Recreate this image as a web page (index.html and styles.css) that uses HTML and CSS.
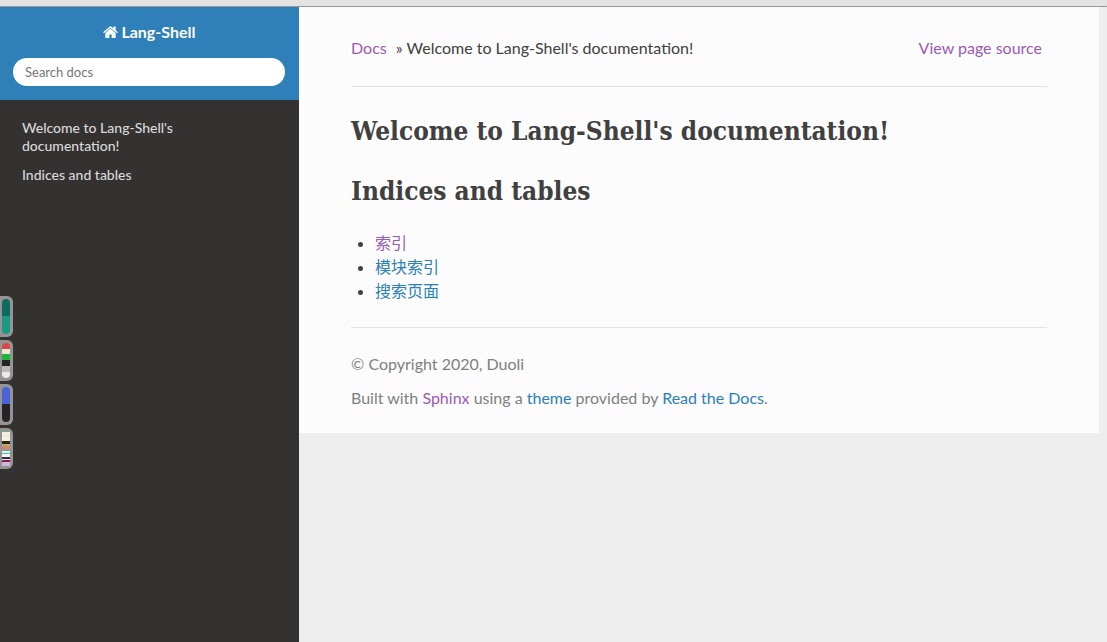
FILE: index.html
```
<!DOCTYPE html>
<html lang="zh-CN">
<head>
    <meta charset="UTF-8">
    <meta name="viewport" content="width=device-width, initial-scale=1.0">
    <title>Welcome to Lang-Shell's documentation!</title>
    <link rel="stylesheet" href="styles.css">
</head>
<body>
    <div class="window-edge"></div>
    <div class="page">
        <nav class="sidebar">
            <div class="sidebar-header">
                <a class="home-link" href="#">
                    <svg class="home-icon" viewBox="0 0 1664 1312" aria-hidden="true">
                        <path fill="currentColor" d="M1408 768v480q0 26-19 45t-45 19H960V928H704v384H320q-26 0-45-19t-19-45V768q0-1 .5-3t.5-3l575-474 575 474q1 2 1 6zm223-69l-62 74q-8 9-21 11h-3q-13 0-21-7L832 200 140 777q-12 8-24 7-13-2-21-11l-62-74q-8-10-7-23.500t11-21.500L756 55q32-26 76-26t76 26l244 204V64q0-14 9-23t23-9h192q14 0 23 9t9 23v408l219 182q10 8 11 21.500t-7 23.500z"/>
                    </svg>
                    Lang-Shell
                </a>
                <form class="search" role="search">
                    <input class="search-input" type="text" placeholder="Search docs" aria-label="Search docs">
                </form>
            </div>
            <ul class="menu">
                <li><a href="#welcome">Welcome to Lang-Shell's documentation!</a></li>
                <li><a href="#indices">Indices and tables</a></li>
            </ul>
        </nav>
        <div class="content-wrap">
            <div class="content">
                <header class="topbar">
                    <div class="breadcrumbs">
                        <a class="crumb visited" href="#">Docs</a>
                        <span>» Welcome to Lang-Shell's documentation!</span>
                    </div>
                    <a class="source-link visited" href="#">View page source</a>
                </header>
                <hr>
                <main>
                    <h1 id="welcome">Welcome to Lang-Shell's documentation!</h1>
                    <h1 id="indices">Indices and tables</h1>
                    <ul class="index-list">
                        <li><a class="visited" href="#">索引</a></li>
                        <li><a href="#">模块索引</a></li>
                        <li><a href="#">搜索页面</a></li>
                    </ul>
                </main>
                <hr>
                <footer>
                    <p>© Copyright 2020, Duoli</p>
                    <p>Built with <a class="visited" href="#">Sphinx</a> using a <a href="#">theme</a> provided by <a href="#">Read the Docs</a>.</p>
                </footer>
            </div>
        </div>
    </div>

    <!-- colour tabs docked to the left edge of the window -->
    <div class="dock">
        <div class="tab"><div class="swatch teal"></div></div>
        <div class="tab"><div class="swatch flag"></div></div>
        <div class="tab"><div class="swatch blue"></div></div>
        <div class="tab"><div class="swatch stripes"></div></div>
    </div>
</body>
</html>
```
FILE: styles.css
```
* {
    box-sizing: border-box;
}
body {
    margin: 0;
    min-height: 100vh;
    display: flex;
    flex-direction: column;
    font-family: Lato, "Noto Sans CJK SC", sans-serif;
    font-size: 16px;
    line-height: 24px;
    color: #404040;
    background: #eee;
}
a {
    color: #2980b9;
    text-decoration: none;
}
a.visited {
    color: #9b59b6;
}
.window-edge {
    height: 7px;
    background: #e4e3e3;
    border-bottom: 1px solid #999;
}
.page {
    flex: 1;
    display: flex;
}

/* sidebar */
.sidebar {
    flex: none;
    width: 299px;
    background: #343131;
}
.sidebar-header {
    padding: 13px 14px 14px 13px;
    background: #2f80b9;
    text-align: center;
}
.home-link {
    display: inline-block;
    margin-bottom: 14px;
    font-weight: bold;
    color: #fcfcfc;
}
.home-icon {
    width: 15px;
    height: 12px;
}
.search {
    display: flex;
}
.search-input {
    width: 100%;
    height: 28px;
    padding: 0 12px;
    border: 0;
    border-radius: 50px;
    font-family: inherit;
    font-size: 13px;
    color: #333;
    background: #fff;
}
.search-input::placeholder {
    color: #757575;
}
.menu {
    margin: 0;
    padding: 14px 22px;
    list-style: none;
    font-size: 14px;
    font-weight: 500;
    line-height: 18px;
}
.menu a {
    display: block;
    max-width: 210px;
    padding: 5px 0 6px;
    color: #d9d9d9;
}

/* content */
.content-wrap {
    flex: 1;
}
.content {
    max-width: 800px;
    padding: 29px 52px 13px;
    background: #fcfcfc;
}
.topbar {
    display: flex;
    justify-content: space-between;
    padding-bottom: 2px;
}
.crumb {
    padding-right: 5px;
}
.source-link {
    padding-right: 5px;
}
hr {
    height: 1px;
    margin: 24px 0;
    border: 0;
    background: #e1e4e5;
}
h1 {
    margin: 0 0 20px;
    font-family: "Roboto Slab", "DejaVu Serif Condensed", "DejaVu Serif", serif;
    font-size: 26px;
    font-weight: bold;
    line-height: 40px;
}
.index-list {
    margin: 0;
    padding-left: 24px;
}
footer {
    color: #808080;
}
footer p {
    margin: 0 0 10px;
}

/* dock */
.dock {
    position: fixed;
    top: 296px;
    left: 0;
    display: grid;
    gap: 3px;
}
.tab {
    width: 13px;
    height: 41px;
    padding: 3px 3px 3px 2px;
    border-radius: 0 6px 6px 0;
    background: #959393;
}
.swatch {
    height: 35px;
    border-radius: 4px;
}
.teal {
    background: linear-gradient(#0e6b60 50%, #1a9a86 50%);
}
.flag {
    background: linear-gradient(#e04444 0 6px, #eee8d0 6px 11px, #1fb53c 11px 17px, #242424 17px 23px, #b9b9bd 23px 29px, #e9e9ee 29px);
}
.blue {
    background: linear-gradient(#4a63d8 50%, #242428 50%);
}
.stripes {
    border-radius: 0;
    background: linear-gradient(#6fae94 0 1px, #f3efdc 1px 5px, #dfe8d0 5px 6px, #f6f3e6 6px 10px, #28240f 10px 13px, #b5ab72 13px 15px, #d98268 15px 18px, #8f9a94 18px 20px, #d9f2ee 20px 22px, #58bdb0 22px 23px, #f4f4f4 23px 26px, #3c2a38 26px 28px, #f3e9f0 28px 29px, #8a1c50 29px 31px, #c9b8d8 31px);
}
```
